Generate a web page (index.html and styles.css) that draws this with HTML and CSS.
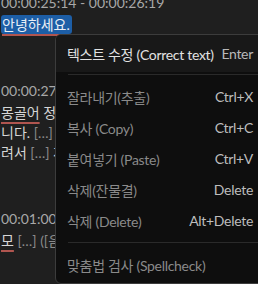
FILE: index.html
```html
<!DOCTYPE html>
<html lang="ko">
<head>
    <meta charset="UTF-8">
    <title>자막 편집</title>
    <link rel="stylesheet" href="styles.css">
</head>
<body>
    <div class="cue-list">
        <div class="cue">
            <div class="time">00:00:25:14 - 00:00:26:19</div>
            <div class="line"><span class="selected"><span class="typo">안녕하세요</span>.</span></div>
        </div>
        <div class="cue">
            <div class="time">00:00:27:05 - 00:00:31:02</div>
            <div class="line"><span class="typo">몽골어</span> 정말 배우기 어렵습</div>
            <div class="line">니다. <span class="dim">[…]</span> 그래도 재미있</div>
            <div class="line">려서 <span class="dim">[…]</span> 계속 공부합니다</div>
        </div>
        <div class="cue">
            <div class="time">00:01:00:08 - 00:01:02:15</div>
            <div class="line"><span class="typo">모</span> <span class="dim">[…] ([음악])</span></div>
        </div>
    </div>

    <!-- context menu -->
    <div class="menu">
        <div class="item active">
            <span class="label">텍스트 수정 (Correct text)</span>
            <span class="key">Enter</span>
        </div>
        <div class="sep"></div>
        <div class="item">
            <span class="label">잘라내기(추출)</span>
            <span class="key">Ctrl+X</span>
        </div>
        <div class="item">
            <span class="label">복사 (Copy)</span>
            <span class="key">Ctrl+C</span>
        </div>
        <div class="item">
            <span class="label">붙여넣기 (Paste)</span>
            <span class="key">Ctrl+V</span>
        </div>
        <div class="item">
            <span class="label">삭제(잔물결)</span>
            <span class="key">Delete</span>
        </div>
        <div class="item">
            <span class="label">삭제 (Delete)</span>
            <span class="key">Alt+Delete</span>
        </div>
        <div class="sep"></div>
        <div class="item">
            <span class="label">맞춤법 검사 (Spellcheck)</span>
        </div>
    </div>
</body>
</html>
```

FILE: styles.css
```css
html, body {
    margin: 0;
    height: 100%;
}
body {
    background-color: #1f1f1f;
    font-family: Lato, "Noto Sans CJK KR", sans-serif;
    font-size: 14px;
    color: #d6d6d6;
    overflow: hidden;
    position: relative;
}
.cue-list {
    margin-top: -7px;
    padding-left: 1px;
}
.cue {
    margin-bottom: 46px;
}
.time, .line {
    height: 20px;
    line-height: 20px;
    white-space: nowrap;
}
.time {
    color: #a8a8a8;
    margin-bottom: 2px;
}
.selected {
    background-color: #1d5ea6;
    color: #e8eef6;
    border-radius: 3px;
    padding: 1px 2px 1px 1px;
}
.typo {
    text-decoration: underline;
    text-decoration-color: #b0554f;
    text-decoration-thickness: 2px;
    text-underline-offset: 4px;
}
.dim {
    color: #8a8a8a;
}
.menu {
    position: absolute;
    left: 55px;
    top: 34px;
    width: 212px;
    height: 246px;
    background-color: #0e0e0e;
    border: 1px solid #3c3c3c;
    border-radius: 6px;
    padding-bottom: 2px;
}
.item {
    display: flex;
    justify-content: space-between;
    align-items: center;
    gap: 6px;
    height: 31px;
    padding: 0 15px 0 11px;
    color: #8a8a8a;
    white-space: nowrap;
    letter-spacing: -0.3px;
}
.item .key {
    color: #bdbdbd;
}
.item.active {
    height: 37px;
    background-color: #181818;
    color: #e2e2e2;
    border-radius: 5px 5px 0 0;
}
.item.active .key {
    color: #b8b8b8;
}
.sep {
    height: 1px;
    background-color: #2a2a2a;
    margin: 6px 0 6px 12px;
}
.active + .sep {
    margin-top: 2px;
}
```
